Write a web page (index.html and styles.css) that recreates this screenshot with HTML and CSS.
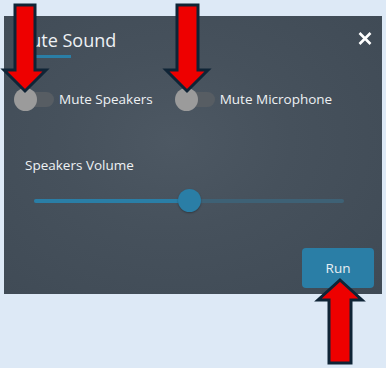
FILE: index.html
```html
<!DOCTYPE html>
<html>
<head>
    <meta charset="utf-8">
    <title>Mute Sound</title>
    <link rel="stylesheet" href="styles.css">
</head>
<body>
    <div class="dialog">
        <div class="dialog-header">
            <h1>Mute Sound</h1>
            <svg class="close" width="14" height="13" viewBox="0 0 14 13">
                <path d="M1.5 1 L12.5 12 M12.5 1 L1.5 12" />
            </svg>
        </div>

        <div class="toggles">
            <div class="toggle-group">
                <span class="switch"><span class="knob"></span></span>
                <label>Mute Speakers</label>
            </div>
            <div class="toggle-group">
                <span class="switch"><span class="knob"></span></span>
                <label>Mute Microphone</label>
            </div>
        </div>

        <div class="volume">
            <div class="volume-label">Speakers Volume</div>
            <div class="slider">
                <div class="slider-fill" style="width: 50%;"></div>
                <div class="slider-thumb" style="left: 50%;"></div>
            </div>
        </div>

        <div class="actions">
            <button class="btn">Run</button>
        </div>
    </div>

    <svg class="arrows" width="386" height="368" viewBox="0 0 386 368">
        <polygon points="15,5 35,5 35,70 46,70 25,91 4,70 15,70" />
        <polygon points="177,5 198,5 198,70 208,70 187,91 166,70 177,70" />
        <polygon points="340,280 362,300 351,300 351,363 329,363 329,300 318,300" />
    </svg>
</body>
</html>
```

FILE: styles.css
```css
body {
    margin: 0;
    background-color: #dde9f6;
    font-family: "Open Sans", "Noto Sans", Arial, sans-serif;
    width: 386px;
    height: 368px;
    position: relative;
    overflow: hidden;
}

.dialog {
    margin: 16px 0 0 4px;
    width: 378px;
    height: 278px;
    box-sizing: border-box;
    padding: 14px 10px 0 10px;
    background: radial-gradient(ellipse at 45% 45%, #4d5863 0%, #46515c 40%, #3f4a55 100%);
    color: #eef1f4;
    display: flex;
    flex-direction: column;
}

.dialog-header {
    display: flex;
    justify-content: space-between;
    align-items: flex-start;
}

.dialog-header h1 {
    margin: 0;
    font-size: 18px;
    font-weight: 400;
    line-height: 20px;
    padding: 0 0 8px 0;
    position: relative;
}

.dialog-header h1::after {
    content: "";
    position: absolute;
    left: 21px;
    bottom: 0;
    width: 36px;
    height: 3px;
    background-color: #2a7ea6;
}

.close {
    margin: 2px 0 0 0;
}

.close path {
    stroke: #ffffff;
    stroke-width: 2.6;
    fill: none;
}

.toggles {
    display: flex;
    gap: 22px;
    margin-top: 30px;
}

.toggle-group {
    display: flex;
    align-items: center;
    gap: 5px;
}

.switch {
    width: 40px;
    height: 22px;
    display: flex;
    align-items: center;
    position: relative;
}

.switch::before {
    content: "";
    position: absolute;
    left: 8px;
    right: 0;
    height: 15px;
    border-radius: 8px;
    background-color: #575d63;
}

.knob {
    width: 23px;
    height: 23px;
    border-radius: 50%;
    background-color: #9b9b9b;
    position: relative;
}

.toggle-group label {
    font-size: 13.5px;
}

.volume {
    margin-top: 46px;
    padding-left: 11px;
}

.volume-label {
    font-size: 13.5px;
}

.slider {
    position: relative;
    margin: 25px 28px 0 9px;
    height: 4px;
    border-radius: 2px;
    background-color: #3e6175;
}

.slider-fill {
    height: 100%;
    border-radius: 2px;
    background-color: #2a7ea6;
}

.slider-thumb {
    position: absolute;
    top: -10px;
    width: 23px;
    height: 23px;
    margin-left: -11px;
    border-radius: 50%;
    background-color: #2a7ea6;
    box-shadow: 0 1px 2px rgba(0,0,0,0.3);
}

.actions {
    margin-top: auto;
    margin-bottom: 6px;
    margin-right: -2px;
    display: flex;
    justify-content: flex-end;
}

.btn {
    width: 72px;
    height: 40px;
    background-color: #2a7ea6;
    color: #e8eef3;
    border: none;
    border-radius: 4px;
    font-family: inherit;
    font-size: 13.5px;
    cursor: pointer;
}

.arrows {
    position: absolute;
    left: 0;
    top: 0;
}

.arrows polygon {
    fill: #ee0000;
    stroke: #0f2436;
    stroke-width: 3;
    stroke-linejoin: miter;
}
```
